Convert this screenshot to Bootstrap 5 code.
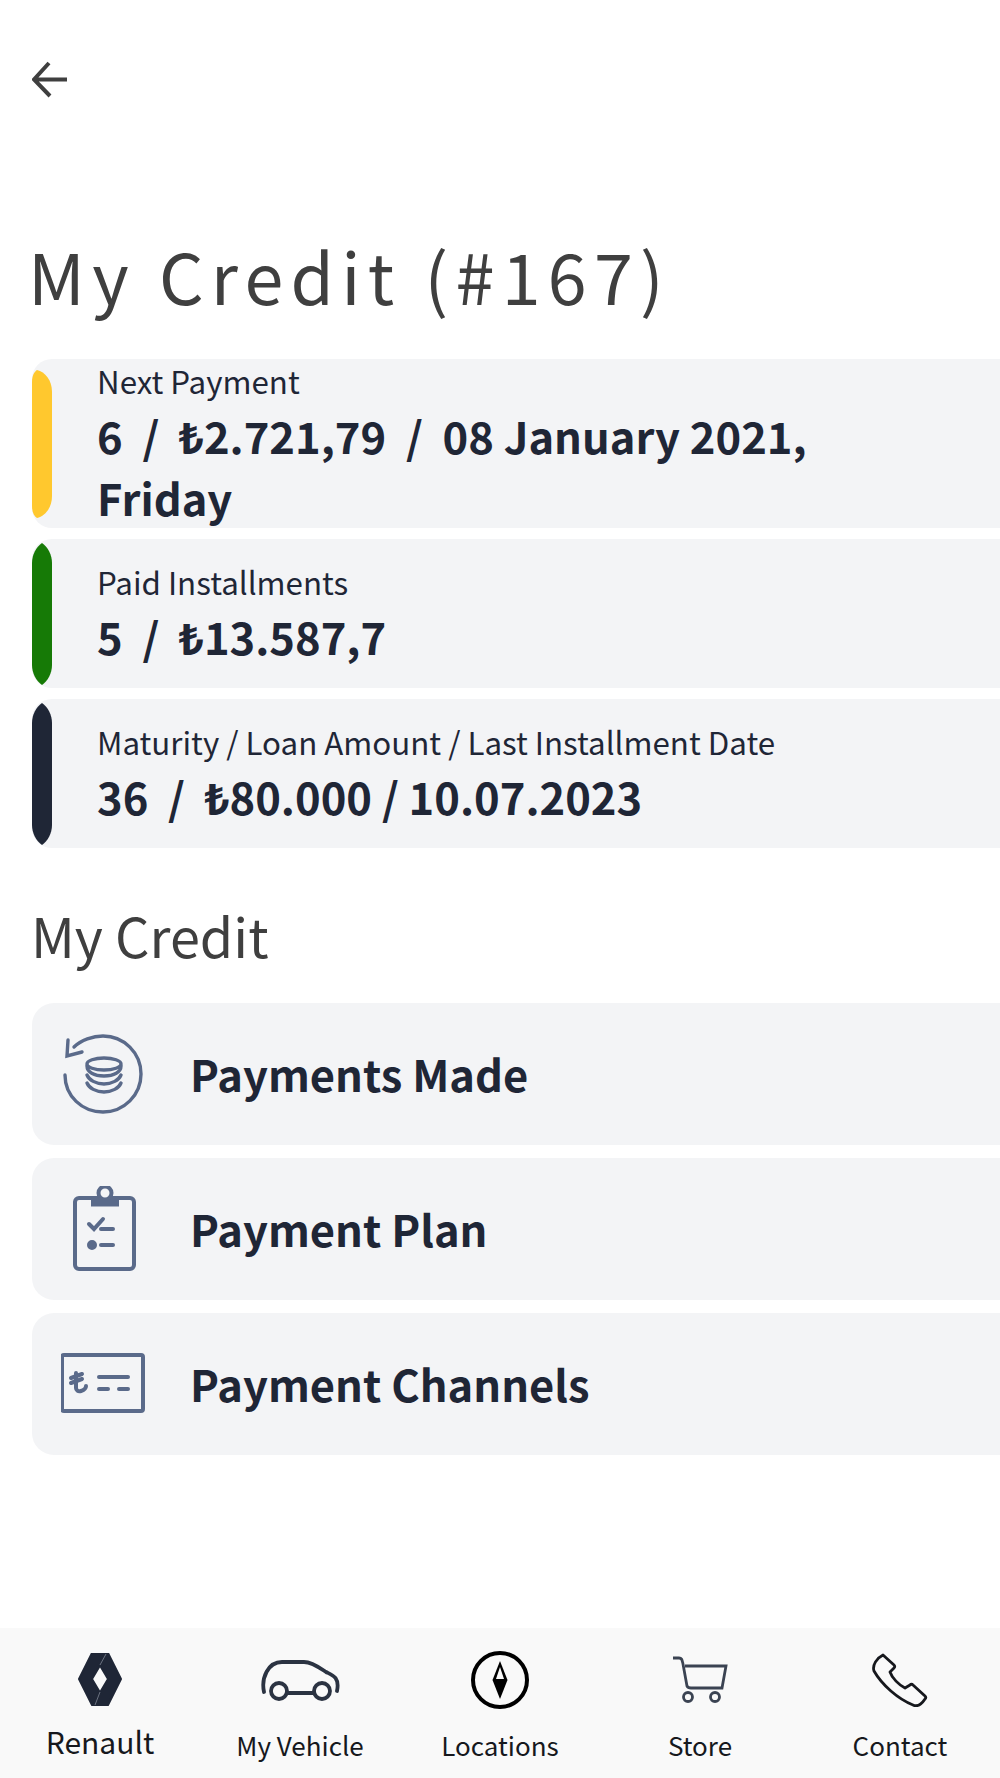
<!DOCTYPE html>
<html lang="en">
<head>
    <meta charset="UTF-8">
    <meta name="viewport" content="width=device-width, initial-scale=1.0">
    <title>My Credit</title>
    <link href="https://cdn.jsdelivr.net/npm/bootstrap@5.3.0/dist/css/bootstrap.min.css" rel="stylesheet">
    <style>
        body { font-family: "Noto Sans CJK SC", "Noto Sans", sans-serif; background: #fff; color: #1f2636; height: 1778px; width: 1000px; overflow: hidden; }
        .app-screen { height: 1778px; }
        .back-bar { padding: 60px 0 0 32px; height: 231px; }
        .page-title { font-size: 70px; font-weight: 400; letter-spacing: 7.3px; color: #3f3f3f; line-height: 88px; margin: 0 0 40px 28px; }
        .stat-list { margin-left: 32px; gap: 11px; }
        .stat-row { background: #f3f4f6; border-radius: 20px 0 0 20px; padding: 2px 0 0 65px; }
        .stat-row.tall { height: 169px; }
        .stat-row.short { height: 149px; }
        .stat-bar { left: 0; top: 4px; width: 20px; height: 142px; clip-path: path('M10 0C16 4 20 12 20 20V122C20 130 16 138 10 142C4 138 0 130 0 122V20C0 12 4 4 10 0Z'); }
        .stat-row.tall .stat-bar { top: 11px; height: 148px; clip-path: path('M5 0C13 2 20 10 20 22V126C20 138 13 146 5 148C2 146 0 142 0 136V12C0 6 2 2 5 0Z'); }
        .stat-label { font-size: 31.300px; line-height: 40px; font-weight: 400; margin-bottom: 4px; }
        .stat-value { font-size: 43.500px; line-height: 62px; font-weight: 700; }
        .section-title { font-size: 54px; font-weight: 400; color: #3f3f3f; line-height: 70px; margin: 52px 0 33px 31px; }
        .menu-list { margin-left: 32px; gap: 13px; }
        .menu-row { height: 142px; background: #f3f4f6; border-radius: 22px 0 0 22px; font-size: 43.500px; font-weight: 700; }
        .menu-icon { width: 158px; }
        .tab-strip { height: 150px; background: #f9f9f9; color: #16181d; }
        .tab-item { width: 200px; }
        .tab-icon { height: 100px; padding-top: 4px; }
        .tab-label { font-size: 26px; line-height: 34px; }
        .tab-label.first { font-size: 30px; line-height: 30px; margin-top: -2px; }
    </style>
</head>
<body>
    <div class="app-screen d-flex flex-column">
        <div class="back-bar">
            <svg width="36" height="40" viewBox="0 0 36 40" fill="none" stroke="#3f3f3f" stroke-width="4"><path d="M35 19.500H2M17 3 2 19.500 18 36"/></svg>
        </div>
        <h1 class="page-title">My Credit (#167)</h1>

        <div class="stat-list d-flex flex-column">
            <div class="stat-row tall position-relative d-flex flex-column justify-content-center">
                <div class="stat-bar position-absolute" style="background:#ffc82e"></div>
                <div class="stat-label">Next Payment</div>
                <div class="stat-value">6 &nbsp;/ &nbsp;₺2.721,79 &nbsp;/ &nbsp;08 January 2021,<br>Friday</div>
            </div>
            <div class="stat-row short position-relative d-flex flex-column justify-content-center">
                <div class="stat-bar position-absolute" style="background:#167a06"></div>
                <div class="stat-label">Paid Installments</div>
                <div class="stat-value">5 &nbsp;/ &nbsp;₺13.587,7</div>
            </div>
            <div class="stat-row short position-relative d-flex flex-column justify-content-center">
                <div class="stat-bar position-absolute" style="background:#1f2636"></div>
                <div class="stat-label">Maturity / Loan Amount / Last Installment Date</div>
                <div class="stat-value">36 &nbsp;/ &nbsp;₺80.000 / 10.07.2023</div>
            </div>
        </div>

        <h2 class="section-title">My Credit</h2>

        <div class="menu-list d-flex flex-column">
            <div class="menu-row d-flex align-items-center">
                <div class="menu-icon d-flex justify-content-center">
                    <svg width="100" height="84" viewBox="3 -1 100 84" fill="none" stroke="#5a6a8a" stroke-width="3.400" stroke-linecap="round">
                        <path d="M16 14C23 7 35 3 45 3C66 3 83 20 83 41C83 62 66 79 45 79C24 79 7 63 7 42"/>
                        <path d="M10 7 9 23 24 19"/>
                        <ellipse cx="46" cy="31" rx="17" ry="6"/>
                        <path d="M29 33C29 39 36 43 46 43C56 43 63 39 63 33"/>
                        <path d="M29 42C31 47 38 51 46 51C54 51 61 47 63 42"/>
                        <path d="M29 50C31 55 38 59 46 59C54 59 61 55 63 50"/>
                    </svg>
                </div>
                <span>Payments Made</span>
            </div>
            <div class="menu-row d-flex align-items-center">
                <div class="menu-icon d-flex justify-content-center">
                    <svg width="100" height="86" viewBox="6 1 100 86" fill="none" stroke="#5a6a8a" stroke-width="4" stroke-linecap="round">
                        <rect x="20" y="13" width="59" height="71" rx="4"/>
                        <circle cx="50" cy="8" r="6.500" fill="#f3f4f6"/>
                        <path d="M36 18H64" stroke-width="7" stroke-linecap="butt"/>
                        <path d="M34 39 39 44 48 34M46 44H58"/>
                        <circle cx="37" cy="60" r="3" fill="#5a6a8a"/>
                        <path d="M46 60H58" />
                    </svg>
                </div>
                <span>Payment Plan</span>
            </div>
            <div class="menu-row d-flex align-items-center">
                <div class="menu-icon d-flex justify-content-center">
                    <svg width="100" height="62" viewBox="8 1 100 62" fill="none" stroke="#5a6a8a" stroke-width="4" stroke-linecap="round">
                        <rect x="9" y="3" width="81" height="56" rx="2"/>
                        <path d="M23 21V36C23 38 25 40 28 39C31 38 33 36 33 34M18 26 29 22M18 31 29 27"/>
                        <path d="M46 25H75M46 37H55M66 37H75"/>
                    </svg>
                </div>
                <span>Payment Channels</span>
            </div>
        </div>

        <div class="tab-strip d-flex mt-auto">
            <div class="tab-item text-center">
                <div class="tab-icon d-flex align-items-center justify-content-center">
                    <svg width="44" height="54" viewBox="0 1 44 54">
                        <path fill="#1f2636" stroke="#1f2636" stroke-width="2" stroke-linejoin="round" fill-rule="evenodd" d="M14 1H30L43 27 30 53H14L1 27ZM22 13.500 14 27 22 40.500 30 27Z"/>
                        <path d="M28 2 22 13M22 40 17 53" stroke="#6b7280" stroke-width="1"/>
                    </svg>
                </div>
                <div class="tab-label first">Renault</div>
            </div>
            <div class="tab-item text-center">
                <div class="tab-icon d-flex align-items-center justify-content-center">
                    <svg width="80" height="44" viewBox="0 0 80 44" fill="none" stroke="#2b3342" stroke-width="3.800" stroke-linecap="round">
                        <path d="M4 34C1 20 8 4 22 4H44C52 4 60 10 66 14C72 17 80 19 77 33"/>
                        <circle cx="19" cy="33" r="8"/><circle cx="62" cy="33" r="8"/>
                        <path d="M27 35H54"/>
                    </svg>
                </div>
                <div class="tab-label">My Vehicle</div>
            </div>
            <div class="tab-item text-center">
                <div class="tab-icon d-flex align-items-center justify-content-center">
                    <svg width="58" height="58" viewBox="0 0 58 58" fill="none" stroke="#000" stroke-width="4">
                        <circle cx="29" cy="29" r="27"/>
                        <path fill="#000" stroke="none" d="M29 10 36.500 29 29 48 21.500 29Z"/>
                        <path fill="#f9f9f9" stroke="none" d="M29 16 33 28H25Z"/>
                    </svg>
                </div>
                <div class="tab-label">Locations</div>
            </div>
            <div class="tab-item text-center">
                <div class="tab-icon d-flex align-items-center justify-content-center">
                    <svg width="56" height="48" viewBox="0 0 56 48" fill="none" stroke="#3b4352" stroke-width="2.800">
                        <path d="M1 2H7C10 2 10 4 11 8L15 30C16 32 17 32 19 32H50L54 10H13"/>
                        <circle cx="16" cy="41" r="4.500"/><circle cx="43" cy="41" r="4.500"/>
                    </svg>
                </div>
                <div class="tab-label">Store</div>
            </div>
            <div class="tab-item text-center">
                <div class="tab-icon d-flex align-items-center justify-content-center">
                    <svg width="56" height="54" viewBox="0 0 56 54" fill="none" stroke="#16181d" stroke-width="2.800" stroke-linejoin="round">
                        <path d="M11 2 22 12C23 13 23 14 22 15L18 19C20 25 27 32 33 35L38 32C39 31 40 31 41 32L53 43C54 44 54 45 53 46C49 52 45 54 41 52C26 46 10 32 2 18C0 12 5 5 11 2Z"/>
                    </svg>
                </div>
                <div class="tab-label">Contact</div>
            </div>
        </div>
    </div>
    <script src="https://cdn.jsdelivr.net/npm/bootstrap@5.3.0/dist/js/bootstrap.bundle.min.js"></script>
</body>
</html>
